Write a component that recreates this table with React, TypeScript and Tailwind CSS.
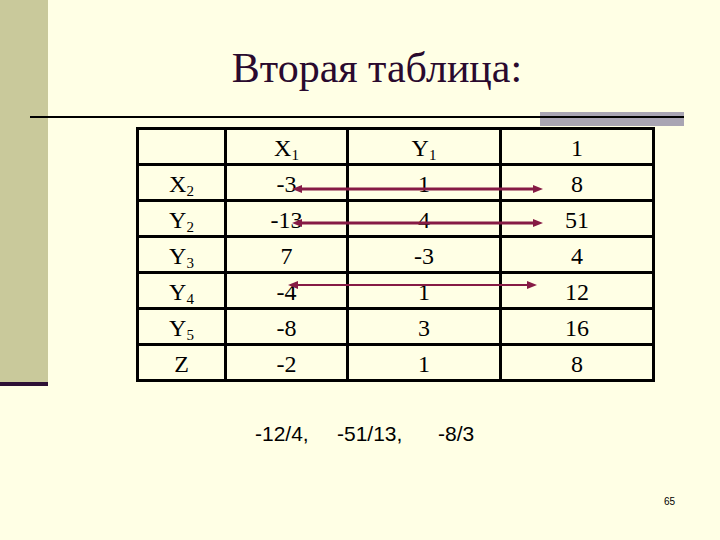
const rows: { label: string; sub?: string; cells: string[] }[] = [
  { label: "X", sub: "2", cells: ["-3", "1", "8"] },
  { label: "Y", sub: "2", cells: ["-13", "4", "51"] },
  { label: "Y", sub: "3", cells: ["7", "-3", "4"] },
  { label: "Y", sub: "4", cells: ["-4", "1", "12"] },
  { label: "Y", sub: "5", cells: ["-8", "3", "16"] },
  { label: "Z", cells: ["-2", "1", "8"] },
];

const arrows = [
  { y: 62, x1: 156, x2: 407, w: 3 },
  { y: 96, x1: 156, x2: 407, w: 3 },
  { y: 158, x1: 152, x2: 401, w: 2 },
];

function Sym({ label, sub }: { label: string; sub?: string }) {
  return (
    <>
      {label}
      {sub && <sub className="text-[15px]">{sub}</sub>}
    </>
  );
}

function Arrows() {
  const c = "#861b45";
  return (
    <svg className="pointer-events-none absolute inset-0" width="516" height="253">
      {arrows.map((a, i) => (
        <g key={i}>
          <line x1={a.x1 + 6} y1={a.y} x2={a.x2 - 6} y2={a.y} stroke={c} strokeWidth={a.w} />
          <polygon points={`${a.x1},${a.y} ${a.x1 + 10},${a.y - 4} ${a.x1 + 10},${a.y + 4}`} fill={c} />
          <polygon points={`${a.x2},${a.y} ${a.x2 - 10},${a.y - 4} ${a.x2 - 10},${a.y + 4}`} fill={c} />
        </g>
      ))}
    </svg>
  );
}

export default function App() {
  const cell = "border-[3px] border-black h-[36px] p-0 pt-[3px] text-center align-middle";
  return (
    <div className="flex h-[540px] w-[720px] overflow-hidden bg-[#ffffe5] font-['Liberation_Serif',serif] text-black">
      <div className="flex w-[48px] shrink-0 flex-col">
        <div className="h-[382px] bg-[#c9c99b]" />
        <div className="h-[4px] bg-[#2d1035]" />
      </div>

      <div className="flex flex-1 flex-col">
        <div className="pr-[14px] pt-[47px] text-center font-['Liberation_Serif',serif] text-[42px] leading-[42px] text-[#2a0a2e]">
          Вторая таблица:
        </div>

        <div className="relative -ml-[18px] mt-[23px] flex h-[14px] w-[654px]">
          <div className="ml-auto h-full w-[144px] bg-[#a9a5b3]" />
          <div className="absolute inset-x-0 top-[4px] h-[2px] bg-black" />
        </div>

        <div className="relative ml-[88px] mt-[1px] w-[516px]">
          <table className="w-[516px] table-fixed border-collapse font-['Liberation_Serif',serif] text-[24px] leading-[28px]">
            <colgroup>
              <col className="w-[88px]" />
              <col className="w-[122px]" />
              <col className="w-[153px]" />
              <col className="w-[153px]" />
            </colgroup>
            <tbody>
              <tr>
                <td className={cell} />
                <td className={cell}><Sym label="X" sub="1" /></td>
                <td className={cell}><Sym label="Y" sub="1" /></td>
                <td className={cell}>1</td>
              </tr>
              {rows.map((r, i) => (
                <tr key={i}>
                  <td className={cell}><Sym label={r.label} sub={r.sub} /></td>
                  {r.cells.map((v, j) => (
                    <td key={j} className={cell}>{v}</td>
                  ))}
                </tr>
              ))}
            </tbody>
          </table>
          <Arrows />
        </div>

        <div className="ml-[207px] mt-[40px] flex font-['Liberation_Sans',sans-serif] text-[21px] leading-[24px]">
          <span className="w-[82px]">-12/4,</span>
          <span className="w-[101px]">-51/13,</span>
          <span>-8/3</span>
        </div>

        <div className="ml-[616px] mt-[50px] font-['Liberation_Sans',sans-serif] text-[10px] leading-[12px]">
          65
        </div>
      </div>
    </div>
  );
}
